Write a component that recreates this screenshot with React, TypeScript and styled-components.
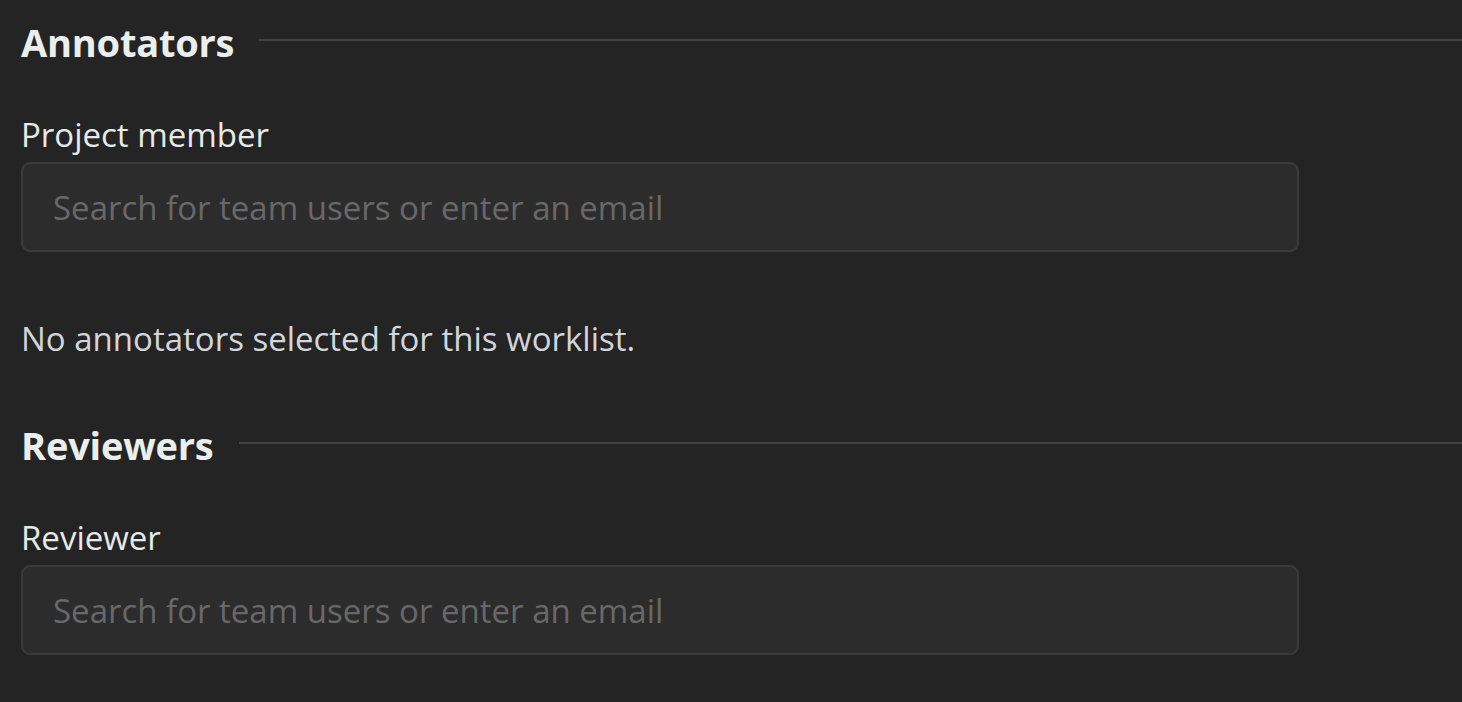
import React from 'react'
import styled, { createGlobalStyle } from 'styled-components'

const GlobalStyle = createGlobalStyle`
  html, body {
    margin: 0;
    padding: 0;
    background: #242424;
  }
  body {
    font-family: "Open Sans", "Noto Sans", sans-serif;
    color: #e6eae9;
  }
`

const Page = styled.div`
  padding: 18px 0 40px 21px;
  overflow: hidden;
`

const Section = styled.section<{ $gapTop?: number }>`
  margin-top: ${p => p.$gapTop ?? 0}px;
`

const SectionHeader = styled.div`
  display: flex;
  align-items: center;
  gap: 25px;
  height: 48px;
`

const SectionTitle = styled.h2`
  margin: 0;
  font-size: 38px;
  line-height: 48px;
  font-weight: 700;
  color: #eaeeed;
  white-space: nowrap;
  letter-spacing: -0.2px;
`

const Rule = styled.div`
  flex: 1;
  height: 2px;
  margin-top: -4px;
  background: #434343;
`

const FieldLabel = styled.label`
  display: block;
  margin-top: 47px;
  font-size: 33px;
  line-height: 44px;
  color: #e6eae9;
`

const SearchInput = styled.input`
  display: block;
  box-sizing: border-box;
  width: 1278px;
  height: 90px;
  margin-top: 5px;
  padding: 0 30px;
  border: 2px solid #3b3b3b;
  border-radius: 9px;
  background: #2c2c2c;
  font-family: inherit;
  font-size: 33px;
  color: #e6eae9;
  outline: none;

  &::placeholder {
    color: #686868;
  }
`

const EmptyNote = styled.p`
  margin: 65px 0 0;
  font-size: 33px;
  line-height: 44px;
  color: #d2d6dc;
`

export default function App() {
  return (
    <>
      <GlobalStyle />
      <Page>
        <Section>
          <SectionHeader>
            <SectionTitle>Annotators</SectionTitle>
            <Rule />
          </SectionHeader>
          <FieldLabel htmlFor="annotator-search">Project member</FieldLabel>
          <SearchInput id="annotator-search" placeholder="Search for team users or enter an email" />
          <EmptyNote>No annotators selected for this worklist.</EmptyNote>
        </Section>

        <Section $gapTop={60}>
          <SectionHeader>
            <SectionTitle>Reviewers</SectionTitle>
            <Rule />
          </SectionHeader>
          <FieldLabel htmlFor="reviewer-search">Reviewer</FieldLabel>
          <SearchInput id="reviewer-search" placeholder="Search for team users or enter an email" />
        </Section>
      </Page>
    </>
  )
}
